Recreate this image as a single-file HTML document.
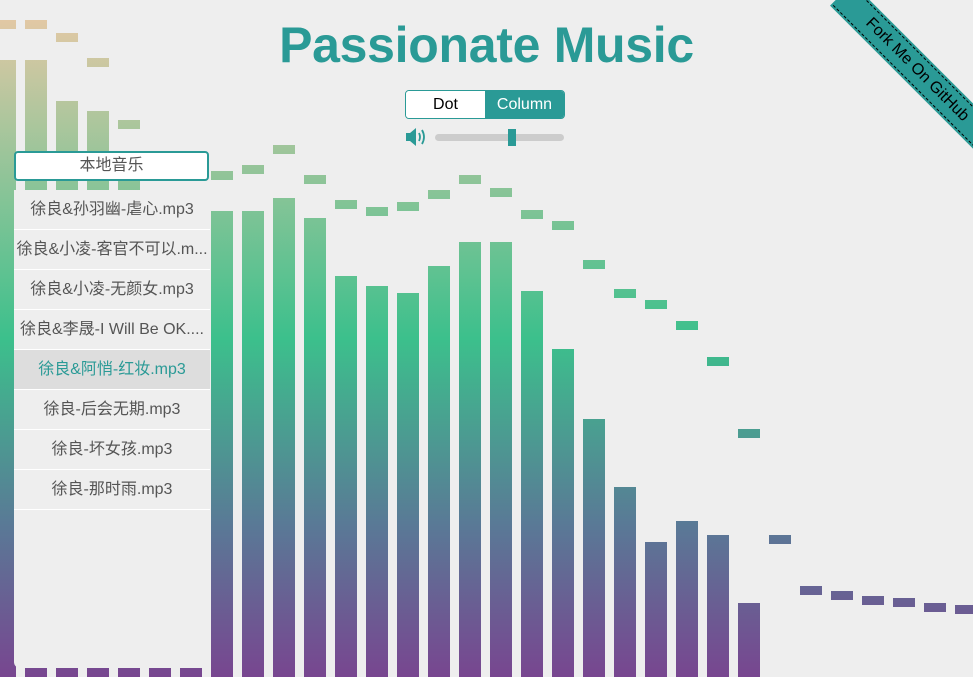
<!DOCTYPE html>
<html><head><meta charset="utf-8"><style>
html,body{margin:0;padding:0;width:973px;height:677px;overflow:hidden;background:#eeeeee;font-family:"Liberation Sans","Noto Sans CJK SC",sans-serif;}
svg.bg{position:absolute;left:0;top:0}
h1{position:absolute;left:0;width:973px;top:16px;margin:0;text-align:center;font-size:50px;font-weight:bold;color:#2a9a96;letter-spacing:-0.3px}
.tog{position:absolute;left:405px;top:90px;width:158px;height:27px;border:1px solid #2a9a96;border-radius:4px;overflow:hidden;display:flex;font-size:16px}
.tog div{flex:1;text-align:center;line-height:27px}
.tog .a{background:#fff;color:#000}.tog .b{background:#2a9a96;color:#fff}
.track{position:absolute;left:435px;top:134px;width:129px;height:7px;background:#cccccc;border-radius:4px}
.thumb{position:absolute;left:508px;top:129px;width:8px;height:17px;background:#2a9a96}
.btn{position:absolute;left:14px;top:151px;width:191px;height:26px;border:2px solid #2a9a96;border-radius:4px;background:#fff;text-align:center;line-height:26px;font-size:16px;color:#555}
.list{position:absolute;left:14px;top:190px;width:196px;height:478px;background:#eeeeee;border-radius:0 0 0 6px}
.list div{height:39px;border-bottom:1px solid #fff;text-align:center;line-height:39px;font-size:16px;color:#555;white-space:nowrap;overflow:hidden}
.list .sel{background:#dddddd;color:#2a9a96}
.rib{position:absolute;left:812px;top:56px;width:210px;height:28px;background:#2a9a96;transform:rotate(45deg);transform-origin:center;box-sizing:border-box;border-top:1px dashed #000;border-bottom:1px dashed #000;box-shadow:0 0 0 2px #2a9a96;text-align:center;line-height:26px;font-size:16px;color:#000}
</style></head><body>
<svg class="bg" width="973" height="677">
<defs><linearGradient id="g" gradientUnits="userSpaceOnUse" x1="0" y1="0" x2="0" y2="677">
<stop offset="0" stop-color="#ecc9a6"/><stop offset="0.5" stop-color="#3cc08c"/><stop offset="0.78" stop-color="#5a7896"/><stop offset="1" stop-color="#784690"/></linearGradient></defs>
<g fill="url(#g)">
<rect x="-6" y="60" width="22" height="617"/><rect x="-6" y="20" width="22" height="9"/>
<rect x="25" y="60" width="22" height="617"/><rect x="25" y="20" width="22" height="9"/>
<rect x="56" y="101" width="22" height="576"/><rect x="56" y="33" width="22" height="9"/>
<rect x="87" y="111" width="22" height="566"/><rect x="87" y="58" width="22" height="9"/>
<rect x="118" y="180" width="22" height="497"/><rect x="118" y="120" width="22" height="9"/>
<rect x="149" y="200" width="22" height="477"/>
<rect x="180" y="200" width="22" height="477"/>
<rect x="211" y="211" width="22" height="466"/><rect x="211" y="171" width="22" height="9"/>
<rect x="242" y="211" width="22" height="466"/><rect x="242" y="165" width="22" height="9"/>
<rect x="273" y="198" width="22" height="479"/><rect x="273" y="145" width="22" height="9"/>
<rect x="304" y="218" width="22" height="459"/><rect x="304" y="175" width="22" height="9"/>
<rect x="335" y="276" width="22" height="401"/><rect x="335" y="200" width="22" height="9"/>
<rect x="366" y="286" width="22" height="391"/><rect x="366" y="207" width="22" height="9"/>
<rect x="397" y="293" width="22" height="384"/><rect x="397" y="202" width="22" height="9"/>
<rect x="428" y="266" width="22" height="411"/><rect x="428" y="190" width="22" height="9"/>
<rect x="459" y="242" width="22" height="435"/><rect x="459" y="175" width="22" height="9"/>
<rect x="490" y="242" width="22" height="435"/><rect x="490" y="188" width="22" height="9"/>
<rect x="521" y="291" width="22" height="386"/><rect x="521" y="210" width="22" height="9"/>
<rect x="552" y="349" width="22" height="328"/><rect x="552" y="221" width="22" height="9"/>
<rect x="583" y="419" width="22" height="258"/><rect x="583" y="260" width="22" height="9"/>
<rect x="614" y="487" width="22" height="190"/><rect x="614" y="289" width="22" height="9"/>
<rect x="645" y="542" width="22" height="135"/><rect x="645" y="300" width="22" height="9"/>
<rect x="676" y="521" width="22" height="156"/><rect x="676" y="321" width="22" height="9"/>
<rect x="707" y="535" width="22" height="142"/><rect x="707" y="357" width="22" height="9"/>
<rect x="738" y="603" width="22" height="74"/><rect x="738" y="429" width="22" height="9"/>
<rect x="769" y="535" width="22" height="9"/>
<rect x="800" y="586" width="22" height="9"/>
<rect x="831" y="591" width="22" height="9"/>
<rect x="862" y="596" width="22" height="9"/>
<rect x="893" y="598" width="22" height="9"/>
<rect x="924" y="603" width="22" height="9"/>
<rect x="955" y="605" width="22" height="9"/>
</g>
<g fill="#2a9a96" stroke="#2a9a96">
<path d="M406 133 h4 l6 -5 v18 l-6 -5 h-4 z" stroke="none"/>
<path d="M419 133 q2 4 0 8" fill="none" stroke-width="1.8"/>
<path d="M422 130 q4 7 0 14" fill="none" stroke-width="1.8"/>
</g>
</svg>
<h1>Passionate Music</h1>
<div class="tog"><div class="a">Dot</div><div class="b">Column</div></div>
<div class="track"></div><div class="thumb"></div>
<div class="btn">本地音乐</div>
<div class="list">
<div>徐良&amp;孙羽幽-虐心.mp3</div>
<div>徐良&amp;小凌-客官不可以.m...</div>
<div>徐良&amp;小凌-无颜女.mp3</div>
<div>徐良&amp;李晟-I Will Be OK....</div>
<div class="sel">徐良&amp;阿悄-红妆.mp3</div>
<div>徐良-后会无期.mp3</div>
<div>徐良-坏女孩.mp3</div>
<div>徐良-那时雨.mp3</div>
</div>
<div class="rib">Fork Me On GitHub</div>
</body></html>
